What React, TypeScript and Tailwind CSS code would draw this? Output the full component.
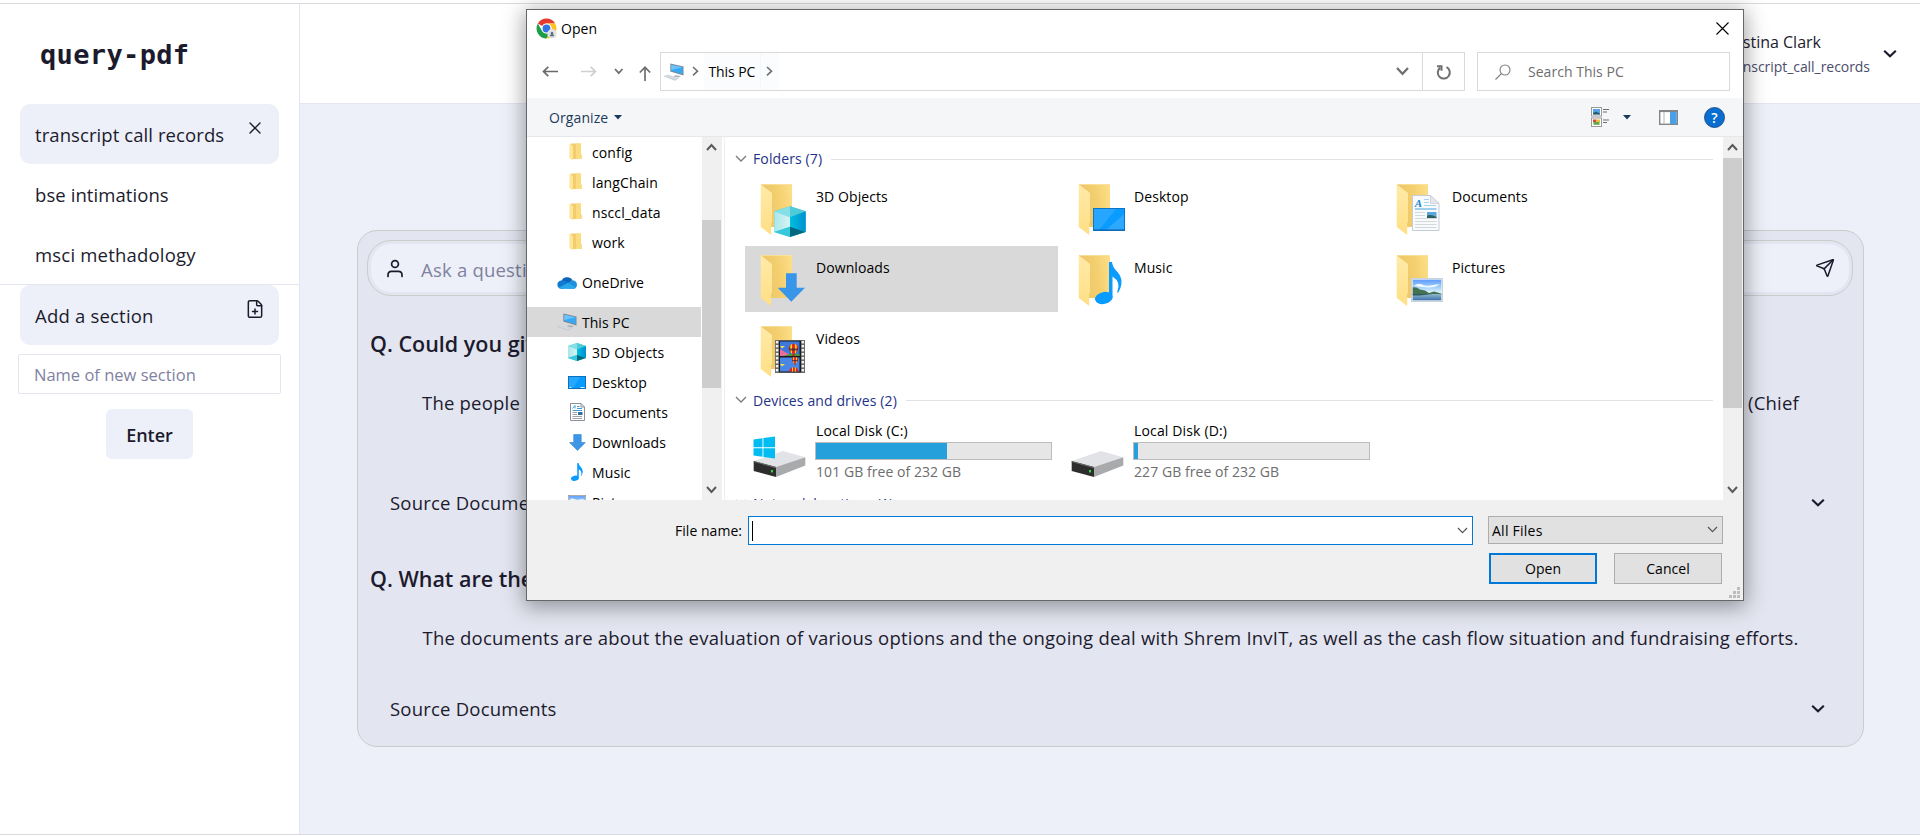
import React from "react";
import { FilePlus, Send, X } from "lucide-react";

type P = { className?: string };

const ChevronSmall = ({ className = "", w = 9, h = 6, sw = 1.6, up = false }: P & { w?: number; h?: number; sw?: number; up?: boolean }) => (
  <svg className={"shrink-0 " + className} width={w + 2} height={h + 2} viewBox={`-1 -1 ${w + 2} ${h + 2}`} fill="none" stroke="currentColor" strokeWidth={sw}>
    <path d={up ? `M0 ${h}L${w / 2} ${h / 6}L${w} ${h}` : `M0 0L${w / 2} ${h - h / 6}L${w} 0`} />
  </svg>
);

const ChevronBold = ({ className = "" }: P) => (
  <svg className={"shrink-0 text-[#1c1b2e] " + className} width="14" height="10" viewBox="0 0 14 10" fill="none" stroke="currentColor" strokeWidth="2.2">
    <path d="M1.2 1.8L7 7.2L12.8 1.8" />
  </svg>
);

const Caret = ({ className = "" }: P) => (
  <svg className={"shrink-0 " + className} width="8" height="5" viewBox="0 0 8 5">
    <path d="M0 0H8L4 4.6Z" fill="#1e395b" />
  </svg>
);

const ChromeIcon = () => (
  <svg width="21" height="21" viewBox="0 0 42 42" className="shrink-0">
    <circle cx="21" cy="21" r="20" fill="#fff" />
    <path d="M3.7 11A20 20 0 0 1 38.3 11H21A10 10 0 0 0 12.3 16Z" fill="#e33b2e" />
    <path d="M3.7 11A20 20 0 0 0 21 41L29.7 26A10 10 0 0 1 12.3 26Z" fill="#1e9e4a" />
    <path d="M38.3 11A20 20 0 0 1 21 41L29.7 26A10 10 0 0 0 29.5 15.5L26 11Z" fill="#fcc31e" />
    <circle cx="21" cy="21" r="9.8" fill="#fff" />
    <circle cx="21" cy="21" r="7.8" fill="#3273e6" />
    <circle cx="32" cy="31.5" r="9.5" fill="#dfe3e8" />
    <path d="M27.500 36.5Q27.500 33.500 30.500 32.500A2.600 2.600 0 1 1 33.500 32.500Q36.500 33.500 36.500 36.5Z" fill="#5f6b78" />
  </svg>
);

const PcIcon = () => (
  <svg width="20" height="18" viewBox="0 0 20 18" className="shrink-0">
    <path d="M6.3 0.5L19.5 3.5V12.5L6.3 8.5Z" fill="#7b8791" />
    <path d="M7.2 1.7L18.7 4.3V11.3L7.2 7.8Z" fill="#36a9f5" />
    <path d="M7.2 1.7L18.7 4.3L7.2 7Z" fill="#6cc3fa" />
    <path d="M11 12.2L17 13L14.5 14.6L9.5 13.4Z" fill="#a9b1b8" />
    <path d="M0 13L4 11.6L14.5 15.2L11 17.4Z" fill="#d3d9de" />
    <path d="M0 13.2L11 17.4L14.5 15.2" stroke="#aab2ba" strokeWidth=".6" fill="none" strokeDasharray="1.5 .7" />
  </svg>
);

const FolderSmall = () => (
  <svg width="13" height="18" viewBox="0 0 13 18" className="mr-[3px] shrink-0">
    <path d="M2 .5H12V11L12.6 12V16H3Z" fill="#f3cd6c" />
    <path d="M7 .5H12V11L12.6 12V16H7Z" fill="#fadb80" />
    <path d="M.4 .5L4 3.2V17.6L.4 15Z" fill="#ffe59a" />
  </svg>
);

const CloudIcon = () => (
  <svg width="20" height="13" viewBox="0 0 20 13" className="shrink-0">
    <path d="M4.5 5A6 5.5 0 0 1 15.5 4.2L10 9Z" fill="#0a64b8" />
    <path d="M4.3 12.8A4.2 4.2 0 0 1 4.8 4.4Q7 4 8.8 5.2L14 8.4L7 12.8Z" fill="#1179d0" />
    <path d="M11 7L14.8 4.2Q19.8 4.2 20 8.8Q19.8 12.8 16 12.8H9Z" fill="#1b90df" />
    <path d="M1.8 11.8L11 6.8L19 11.6Q18 12.8 16 12.8H4.3Q2.8 12.8 1.8 11.8Z" fill="#29a7ec" />
  </svg>
);

const Cube = ({ id }: { id: string }) => (
  <g>
    <defs>
      <linearGradient id={id + "l"} x1="0" x2="1" y1="0" y2="0">
        <stop offset="0" stopColor="#a9e8ea" />
        <stop offset="1" stopColor="#d6f4f3" />
      </linearGradient>
      <linearGradient id={id + "r"} x1="0" x2="1" y1="0" y2="0">
        <stop offset="0" stopColor="#00bfe0" />
        <stop offset="1" stopColor="#008fd0" />
      </linearGradient>
    </defs>
    <path d="M15.7 0L31.4 5V25.7L15.7 30.7L0 25.7V5Z" fill="#35c9de" />
    <path d="M0 5L15.7 0V11Z" fill="#84e0e6" />
    <path d="M31.4 5L15.7 0V11Z" fill="#4fcbd8" />
    <path d="M0 5L15.7 11V20.5L0 25.7Z" fill={`url(#${id}l)`} />
    <path d="M31.4 5L15.7 11V20.5L31.4 25.7Z" fill={`url(#${id}r)`} />
    <path d="M0 25.7L15.7 20.5V30.7Z" fill="#38c8dc" />
    <path d="M31.4 25.7L15.7 20.5V30.7Z" fill="#00687f" />
  </g>
);

const Note = () => (
  <g fill="#0a9bff">
    <path d="M14 0H17Q17.4 5 22 9.5Q30.5 18.500 23 31L22.200 30Q26.500 20 17.500 14.500V36H14Z" />
    <ellipse cx="8.8" cy="36" rx="8.9" ry="6" transform="rotate(-12 8.800 36)" />
  </g>
);

const Landscape = ({ w, h, frame = "#c9d3dc" }: { w: number; h: number; frame?: string }) => (
  <svg width={w} height={h} viewBox="0 0 32 24" preserveAspectRatio="none">
    <defs>
      <linearGradient id="sky" x1="0" x2="0" y1="0" y2="1">
        <stop offset="0" stopColor="#5f9cff" />
        <stop offset=".6" stopColor="#a5d2fb" />
        <stop offset="1" stopColor="#e2f3fc" />
      </linearGradient>
      <linearGradient id="lake" x1="0" x2="0" y1="0" y2="1">
        <stop offset="0" stopColor="#8fb9cc" />
        <stop offset="1" stopColor="#3f72ae" />
      </linearGradient>
    </defs>
    <rect x=".6" y=".6" width="30.800" height="22.800" fill="#f4f6f8" stroke={frame} strokeWidth="1.200" />
    <rect x="1.700" y="1.700" width="28.600" height="13" fill="url(#sky)" />
    <path d="M3 8Q7 4.500 11 6.500T19 7.500T29 6Q24 10 17 9.500T3 8Z" fill="#eef8fe" />
    <path d="M1.700 9.500Q5 8.500 9 11.500L14 12.500L18 15L23 13.500L30.300 15.500V17H1.700Z" fill="#44714f" />
    <rect x="1.700" y="16" width="28.600" height="6.300" fill="url(#lake)" />
    <path d="M1.700 16H22L9 17.600H1.700Z" fill="#2f5a5c" />
  </svg>
);

const Balloon = () => (
  <g>
    <path d="M0-5A5 5 0 0 1 5 0Q4 4 1.500 5.500H-1.500Q-4 4-5 0A5 5 0 0 1 0-5Z" fill="#e0231f" />
    <path d="M-1.500-4.700V5H-2.500Q-4-1-3-4Z M1.500-4.700V5H2.500Q4-1 3-4Z" fill="#ffd91f" />
    <path d="M-5 0H5L4 2H-4Z" fill="#2a2140" opacity=".7" />
    <rect x="-1.300" y="6" width="2.600" height="2" fill="#c42a1c" />
  </g>
);

const Film = () => (
  <svg x="15" y="15" width="30" height="33" viewBox="0 0 30 33">
    <rect width="30" height="33" fill="#6a6a6a" />
    <rect x="4" y=".8" width="22" height="31.500" fill="#1b1b1f" />
    <rect x="5" y="1.500" width="19.500" height="14.500" fill="#3d78dc" />
    <rect x="5" y="17.500" width="19.500" height="14" fill="#4a86e4" />
    <path d="M5 9L10 12L15 14.500V16H5Z" fill="#e86e9a" />
    <path d="M9 16Q16 12.500 24.500 14V16Z" fill="#3f9c3c" />
    <path d="M5 6H10L7 8.500Z M5 24H10L7 26.500Z" fill="#f4e14a" />
    <g transform="translate(18.500 8.500) scale(.95)"><Balloon /></g>
    <g transform="translate(20 20) scale(.6)"><Balloon /></g>
    <path d="M14 31.500A4.800 4.800 0 0 1 23.500 31.500Z" fill="#e0231f" />
    <path d="M17 31.500V27.500H18V31.500Z M19.800 31.500V27.500H20.800V31.500Z" fill="#ffd91f" />
    {[0, 1, 2, 3, 4, 5, 6, 7].map((i) => (
      <g key={i} fill="#f2f2f2">
        <rect x=".9" y={1 + i * 4} width="2.400" height="2.400" />
        <rect x="26.600" y={1 + i * 4} width="2.400" height="2.400" />
      </g>
    ))}
  </svg>
);

const DocPage = () => (
  <g>
    <path d="M16.500 12.500H34.500L43 20.500V47.500H16.500Z" fill="#f8fafc" stroke="#c5ccd3" />
    <path d="M34.500 12.500V20.500H43Z" fill="#e3e7eb" stroke="#c5ccd3" strokeWidth=".7" />
    <path d="M28 16.500H33M28 19.500H33M28 22.500H40" stroke="#a8d4ee" />
    <path d="M19 26H40.500" stroke="#4aa3da" />
    <path d="M19 29.500H29M19 32.500H29M19 35.500H40.500M19 38.500H40.500M19 41.500H40.500M19 44.500H40.500" stroke="#d3d8dd" />
    <rect x="31" y="29" width="9.500" height="6" fill="#5aa7dc" />
    <path d="M31 32.500Q35 31 40.500 34V35H31Z" fill="#2d5f5c" />
    <text x="18.800" y="24" fontFamily="Liberation Serif, serif" fontStyle="italic" fontWeight="bold" fontSize="11" fill="#1a86cc">A</text>
  </g>
);

type Kind = "cube" | "desktop" | "doc" | "down" | "music" | "pictures" | "video";

const FolderBig = ({ kind }: { kind: Kind }) => (
  <svg width="50" height="57" viewBox="0 0 50 57" className="shrink-0">
    <defs>
      <linearGradient id={"fb" + kind} x1="0" x2="1" y1=".2" y2="0">
        <stop offset="0" stopColor="#edc566" />
        <stop offset=".55" stopColor="#f4d070" />
        <stop offset="1" stopColor="#fedf88" />
      </linearGradient>
      <linearGradient id={"ff" + kind} x1="0" x2="0" y1="0" y2="1">
        <stop offset="0" stopColor="#ffeaa8" />
        <stop offset="1" stopColor="#ffdf85" />
      </linearGradient>
    </defs>
    <path d="M1 1H32V44H11Z" fill={`url(#fb${kind})`} />
    <path d="M1 1H32V1.800H2Z" fill="#fbe5a4" />
    <path d="M.7 1.300L12 10V39L11.200 40V52L.7 44Z" fill={`url(#ff${kind})`} />
    {kind === "cube" && <g transform="translate(14.300 23.300)"><Cube id="big" /></g>}
    {kind === "desktop" && (
      <g>
        <rect x="15.500" y="25.500" width="31" height="22" fill="#0a9bff" stroke="#0c74c4" />
        <path d="M16 26H38L21 47H16Z" fill="#27a6ff" />
        <path d="M46 31L28 47H46Z" fill="#3aaeff" opacity=".7" />
        <path d="M16 47H46.500" stroke="#0d5fa5" />
      </g>
    )}
    {kind === "doc" && <DocPage />}
    {kind === "down" && <path d="M26 19.300H36.700V33.700H45L31.300 47.700L17.700 33.700H26Z" fill="#3796ea" />}
    {kind === "music" && <g transform="translate(17 8)"><Note /></g>}
    {kind === "pictures" && <g transform="translate(15 24)"><Landscape w={32} h={24} /></g>}
    {kind === "video" && <Film />}
  </svg>
);

const Drive = ({ win = false }: { win?: boolean }) => (
  <svg width="54" height="42" viewBox="0 0 54 42" className="shrink-0">
    <path d="M.7 25L30 15L52.300 21.300L23 31Z" fill="#e2e3e6" />
    <path d="M23 31L52.300 21.300V29.500L23 41Z" fill="#a9aaac" />
    <path d="M.7 25L23 31V41L.7 35Z" fill="#2d2d2d" />
    <path d="M.7 25L23 31V32.200L.7 26Z" fill="#6b6b6b" />
    <rect x="18" y="34" width="2" height="2.400" fill="#2fe03b" />
    {win && (
      <g fill="#00bcf2">
        <path d="M.5 3.500L9.500 2.200V11.300H.5Z" />
        <path d="M10.400 2.100L22 .5V11.300H10.400Z" />
        <path d="M.5 12.200H9.500V20.800L.5 19.500Z" />
        <path d="M10.400 12.200H22V22.500L10.400 20.900Z" />
      </g>
    )}
  </svg>
);

const SmallDesktop = () => (
  <svg width="18" height="13" viewBox="0 0 18 13" className="shrink-0">
    <rect x=".5" y=".5" width="17" height="12" fill="#0a9bff" stroke="#0a70bd" />
    <path d="M1 1H12L6 11H1Z" fill="#27a8ff" />
    <path d="M1.500 11.500H16.500" stroke="#d8efff" strokeDasharray="2 9 4" />
  </svg>
);
const SmallDoc = () => (
  <svg width="15" height="18" viewBox="0 0 15 18" className="shrink-0">
    <path d="M.5 .5H11L14.500 4V17.500H.5Z" fill="#fff" stroke="#8b9196" />
    <path d="M11 .5V4H14.500" fill="none" stroke="#8b9196" />
    <path d="M2.500 5.500L5 2.500V5.500M7 3.500H9.500M7 5.500H12M2.500 7.500H12" stroke="#3f9ad6" fill="none" />
    <path d="M2.500 9.500H7M2.500 11.500H7M2.500 13.500H12M2.500 15.500H12" stroke="#9aa0a5" />
    <rect x="8" y="9" width="4.500" height="3" fill="#2c6f9e" />
  </svg>
);
const SmallDown = () => (
  <svg width="17" height="17" viewBox="0 0 17 17" className="shrink-0">
    <path d="M4.700 .5H12.200V8.500H16.300L8.500 16.500L.6 8.500H4.700Z" fill="#3d97e6" stroke="#2f83d0" strokeWidth=".6" />
  </svg>
);
const SmallCube = () => (
  <svg width="18" height="18" viewBox="0 0 31.400 30.700" preserveAspectRatio="none" className="shrink-0"><Cube id="sm" /></svg>
);
const SmallNote = () => (
  <svg width="12" height="18" viewBox="0 0 27 42.500" preserveAspectRatio="none" className="shrink-0"><Note /></svg>
);

const BackArrow = ({ className = "", flip = false }: P & { flip?: boolean }) => (
  <svg className={"shrink-0 " + className} width="16" height="11" viewBox="0 0 16 11" fill="none" stroke="currentColor" strokeWidth="1.700">
    <path d={flip ? "M0 5.500H14.500M9.700 .8L14.500 5.500L9.700 10.200" : "M16 5.500H1.500M6.300 .8L1.500 5.500L6.300 10.200"} />
  </svg>
);

const TreeRow = ({ icon, label, root = false, selected = false }: { icon: React.ReactNode; label: string; root?: boolean; selected?: boolean }) => (
  <div className={"flex h-[30px] w-[174px] shrink-0 items-center " + (selected ? "bg-[#d9d9d9] " : "") + (root ? "pl-[30px]" : "pl-[40px] tracking-[0.120px]")}>
    <div className="flex w-5 items-center justify-center">{icon}</div>
    <span className="ml-[5px] pt-px">{label}</span>
  </div>
);

const SectionHead = ({ label }: { label: string }) => (
  <div className="flex h-[22px] items-center pl-[10px] pr-[10px] text-[#1e3287]">
    <ChevronSmall className="text-[#7a7a7a]" w={10} h={6} sw={1.3} />
    <span className="ml-[6px] tracking-[0.12px]">{label}</span>
    <div className="mt-px ml-[9px] h-px flex-1 bg-[#e2e2e2]" />
  </div>
);

const tiles: { kind: Kind; label: string; selected?: boolean }[] = [
  { kind: "cube", label: "3D Objects" },
  { kind: "desktop", label: "Desktop" },
  { kind: "doc", label: "Documents" },
  { kind: "down", label: "Downloads", selected: true },
  { kind: "music", label: "Music" },
  { kind: "pictures", label: "Pictures" },
  { kind: "video", label: "Videos" },
];

const Disk = ({ label, free, fill, win = false }: { label: string; free: string; fill: string; win?: boolean }) => (
  <div className="flex h-[66px] w-[313px] pl-[8px]">
    <div className="pt-[17px]"><Drive win={win} /></div>
    <div className="ml-[8px] flex w-[237px] flex-col">
      <span className="h-[21px] pl-px leading-[24px] tracking-[0.150px]">{label}</span>
      <div className="mt-[2px] h-[18px] border border-[#bcbcbc] bg-[#e6e6e6]"><div className={"h-full bg-[#26a0da] " + fill} /></div>
      <span className="pl-px leading-[24px] tracking-[0.060px] text-[#6d6d6d]">{free}</span>
    </div>
  </div>
);

const Scrollbar = ({ top, thumb }: { top: string; thumb: string }) => (
  <div className="flex h-full w-[20px] shrink-0 flex-col items-start bg-[#f0f0f0] text-[#5a5a5a]">
    <div className={"flex w-[19px] shrink-0 justify-center pt-[6px] " + top}><ChevronSmall up w={9} h={6} sw={2} /></div>
    <div className={"w-[19px] bg-[#cdcdcd] " + thumb} />
    <div className="flex w-[19px] flex-1 items-end justify-center pb-[6px]"><ChevronSmall w={9} h={6} sw={2} /></div>
  </div>
);

const OpenDialog = () => (
  <div className="absolute top-[9px] left-[526px] flex h-[592px] w-[1218px] flex-col border border-[#66676b] bg-white text-[14px] tracking-[0.030px] whitespace-nowrap text-black shadow-[0_4px_20px_2px_rgba(0,0,0,0.36)]">
    <div className="flex h-[34px] shrink-0 items-center pl-[9px] pr-[14px] pt-[2px]">
      <ChromeIcon />
      <span className="ml-[4px]">Open</span>
      <svg className="ml-auto" width="13" height="13" viewBox="0 0 13 13" stroke="#000" strokeWidth="1.100"><path d="M.5 .5L12.500 12.500M12.500 .5L.5 12.500" /></svg>
    </div>
    <div className="flex h-[54px] shrink-0 items-center pt-px pl-[15px] text-[#6f6f6f]">
      <BackArrow className="text-[#6a6a6a]" />
      <BackArrow flip className="ml-[23px] text-[#cfcfcf]" />
      <ChevronSmall className="ml-[17px]" w={7.500} h={5} sw={1.800} />
      <svg className="ml-[15px] mt-[3px] shrink-0" width="12" height="15" viewBox="0 0 12 15" fill="none" stroke="currentColor" strokeWidth="1.700"><path d="M6 15V1.500M.8 6.500L6 1.300L11.200 6.500" /></svg>
      <div className="ml-[9.500px] flex h-[39px] w-[805px] items-center border border-[#d9d9d9]">
        <div className="ml-[3px]"><PcIcon /></div>
        <svg className="ml-[8px] shrink-0" width="7" height="11" viewBox="0 0 7 11" fill="none" stroke="currentColor" strokeWidth="1.600"><path d="M1 1L5.500 5.200L1 9.400" /></svg>
        <div className="ml-[4.500px] flex h-[37px] items-center bg-[#fbfcfe] px-[5px] text-black"><span className="tracking-[-0.100px]">This PC</span></div>
        <div className="flex h-[37px] w-[18px] items-center border-l border-[#f4f7fb] bg-[#fbfcfe] pl-[5px]">
          <svg className="shrink-0" width="7" height="11" viewBox="0 0 7 11" fill="none" stroke="currentColor" strokeWidth="1.600"><path d="M1 1L5.500 5.200L1 9.400" /></svg>
        </div>
        <ChevronSmall className="mr-[13px] ml-auto" w={11} h={7} sw={2.200} />
        <div className="flex h-full w-[42px] items-center justify-center border-l border-[#d9d9d9]">
          <svg width="16" height="16" viewBox="0 0 16 16" fill="none" stroke="#6f6f6f" strokeWidth="2"><path d="M10.500 3.200A6 6 0 1 1 4 3.900M1 2.200H5.500V6.800" /></svg>
        </div>
      </div>
      <div className="ml-[12px] flex h-[39px] w-[253px] items-center border border-[#d9d9d9] pl-[17px]">
        <svg width="16" height="16" viewBox="0 0 16 16" fill="none" stroke="#808080" strokeWidth="1.100"><circle cx="10" cy="6" r="5" /><path d="M6.500 9.500L.5 15.500" /></svg>
        <span className="ml-[17px] text-[#6d6d6d]">Search This PC</span>
      </div>
    </div>
    <div className="flex h-[39px] shrink-0 items-center border-b border-[#e6e8eb] bg-[#f5f6f8] pl-[22px] text-[#1e395b]">
      <span className="tracking-[0.100px]">Organize</span>
      <Caret className="ml-[6px]" />
      <svg className="ml-auto shrink-0" width="18" height="20" viewBox="0 0 18 20">
        <rect x=".5" y=".5" width="10" height="8.500" fill="#fff" stroke="#9a9a9a" />
        <rect x="2" y="2" width="7" height="5.500" fill="#5aa4e6" /><path d="M2 6L5 4.500L9 6.500V7.500H2Z" fill="#2a5d6b" />
        <rect x=".5" y="11" width="10" height="8.500" fill="#fff" stroke="#9a9a9a" />
        <rect x="2" y="12.500" width="3.500" height="2.800" fill="#d5483a" /><rect x="5.500" y="12.500" width="3.500" height="2.800" fill="#e8c338" /><rect x="2.500" y="15" width="6" height="2.800" fill="#64a844" />
        <path d="M12 2.500H18M12 5H16M12 13H18M12 15.500H16" stroke="#6f6f6f" />
      </svg>
      <Caret className="ml-[14px]" />
      <svg className="ml-[28px] shrink-0" width="19" height="15" viewBox="0 0 19 15">
        <rect x=".7" y=".7" width="17.600" height="13.600" fill="#fff" stroke="#858585" strokeWidth="1.400" />
        <path d="M1 1.300H18" stroke="#858585" strokeWidth="1.600" /><path d="M5 2V14" stroke="#b5b5b5" />
        <rect x="11" y="2" width="6.700" height="12" fill="#4a9fe6" />
      </svg>
      <svg className="mr-[18px] ml-[26px] shrink-0" width="21" height="21" viewBox="0 0 21 21">
        <circle cx="10.500" cy="10.500" r="10" fill="#0a6ed1" stroke="#0b3f7c" strokeWidth=".8" />
        <text x="10.500" y="15.600" textAnchor="middle" fontFamily="Open Sans, sans-serif" fontWeight="600" fontSize="14" fill="#fff">?</text>
      </svg>
    </div>
    <div className="flex h-[363px] shrink-0 overflow-hidden bg-white">
      <div className="flex h-[363px] w-[175px] shrink-0 flex-col overflow-hidden">
        <TreeRow icon={<FolderSmall />} label="config" />
        <TreeRow icon={<FolderSmall />} label="langChain" />
        <TreeRow icon={<FolderSmall />} label="nsccl_data" />
        <TreeRow icon={<FolderSmall />} label="work" />
        <div className="my-[10px] shrink-0"><TreeRow root icon={<CloudIcon />} label="OneDrive" /></div>
        <TreeRow root selected icon={<PcIcon />} label="This PC" />
        <TreeRow icon={<SmallCube />} label="3D Objects" />
        <TreeRow icon={<SmallDesktop />} label="Desktop" />
        <TreeRow icon={<SmallDoc />} label="Documents" />
        <TreeRow icon={<SmallDown />} label="Downloads" />
        <TreeRow icon={<SmallNote />} label="Music" />
        <TreeRow icon={<Landscape w={18} h={15} frame="#8e9499" />} label="Pictures" />
      </div>
      <Scrollbar top="h-[83px]" thumb="h-[168px]" />
      <div className="w-[3px] shrink-0 border-r border-[#f0f0f0]" />
      <div className="flex h-[363px] w-[998px] shrink-0 flex-col overflow-hidden pt-[11px]">
        <SectionHead label="Folders (7)" />
        <div className="mt-[5px] grid shrink-0 grid-cols-[313px_313px_313px] gap-[5px] pt-px pl-[20px]">
          {tiles.map((t) => (
            <div key={t.label} className={"flex h-[66px] pt-[8px] pl-[15px] " + (t.selected ? "bg-[#d9d9d9]" : "")}>
              <FolderBig kind={t.kind} />
              <span className="ml-[6px] h-[28px] leading-[28px] tracking-[0.080px]">{t.label}</span>
            </div>
          ))}
        </div>
        <div className="mt-[6px] shrink-0"><SectionHead label="Devices and drives (2)" /></div>
        <div className="mt-[8px] flex shrink-0 gap-[5px] pl-[20px]">
          <Disk win label="Local Disk (C:)" free="101 GB free of 232 GB" fill="w-[131px]" />
          <Disk label="Local Disk (D:)" free="227 GB free of 232 GB" fill="w-[4px]" />
        </div>
        <div className="mt-[7px] shrink-0"><SectionHead label="Network locations (1)" /></div>
      </div>
      <Scrollbar top="h-[21px]" thumb="h-[250px]" />
    </div>
    <div className="flex flex-1 flex-col bg-[#f0f0f0] pt-[16px]">
      <div className="flex h-[29px] shrink-0 items-start">
        <span className="w-[215px] text-right leading-[29px]">File name:</span>
        <div className="ml-[6px] flex h-[29px] w-[725px] items-center border border-[#0078d7] bg-white">
          <div className="ml-[3px] h-[20px] w-px bg-black" />
          <ChevronSmall className="mr-[4px] ml-auto text-[#555]" w={9} h={5.500} sw={1.200} />
        </div>
        <div className="ml-[15px] flex h-[28px] w-[235px] items-center border border-[#adadad] bg-[#e1e1e1] pl-[3px]">
          <span className="tracking-[0.250px]">All Files</span>
          <ChevronSmall className="mr-[4px] ml-auto text-[#555]" w={9} h={5.500} sw={1.200} />
        </div>
      </div>
      <div className="mt-[8px] flex pl-[962px]">
        <div className="flex h-[31px] w-[108px] items-center justify-center border-2 border-[#0078d7] bg-[#e1e1e1]">Open</div>
        <div className="ml-[17px] flex h-[31px] w-[108px] items-center justify-center border border-[#adadad] bg-[#e1e1e1]">Cancel</div>
      </div>
      <svg className="mt-[3px] mr-[3px] ml-auto" width="11" height="11" viewBox="0 0 11 11" fill="#bdbdbd">
        <path d="M8 0H11V3H8ZM4 4H7V7H4ZM8 4H11V7H8ZM0 8H3V11H0ZM4 8H7V11H4ZM8 8H11V11H8Z" />
      </svg>
    </div>
  </div>
);

export default function App() {
  return (
    <div className="relative h-[836px] w-[1920px] overflow-hidden bg-white font-['Open_Sans','Noto_Sans',sans-serif] text-[#1c1b2e]">
      <div className="mt-[3px] flex h-[832px] border-y border-[#dadbdf]">
        <aside className="flex w-[300px] shrink-0 flex-col border-r border-[#e3e5f1] bg-white">
          <div className="h-[100px] pt-[34px] pl-[40px] font-['DejaVu_Sans_Mono',monospace] text-[27px] leading-[34px] font-bold tracking-[0.350px]">query-pdf</div>
          <div className="flex flex-col px-5 text-[18.500px] tracking-[0.080px]">
            <div className="flex h-[60px] items-center justify-between rounded-[10px] bg-[#edf0f8] pr-[14px] pl-[15px]">
              <span className="pt-[2px]">transcript call records</span>
              <X size={20} strokeWidth={1.600} className="-mt-3" />
            </div>
            <div className="flex h-[60px] items-center pt-[2px] pl-[15px]">bse intimations</div>
            <div className="flex h-[60px] items-center pt-[2px] pl-[15px] tracking-[0.200px]">msci methadology</div>
          </div>
          <div className="flex flex-col border-t border-[#e3e5f1] px-5">
            <div className="flex h-[60px] items-center justify-between rounded-[10px] bg-[#edf0f8] pr-[14px] pl-[15px] text-[18.500px] tracking-[0.200px]">
              <span className="pt-[2px]">Add a section</span>
              <FilePlus size={20} strokeWidth={1.800} className="-mt-3" />
            </div>
            <div className="-mx-[2px] mt-[9px] flex h-[40px] items-center rounded-[2px] border border-[#e3e5f1] pt-[2px] pl-[15px] text-[16.500px] text-[#7f829f]">Name of new section</div>
            <div className="mt-[15px] flex h-[50px] w-[87px] items-center justify-center self-center rounded-[6px] bg-[#edf0f8] pt-[2px] text-[18px] font-semibold">Enter</div>
          </div>
        </aside>
        <div className="flex flex-1 flex-col bg-[#edf0f8]">
          <header className="flex h-[100px] shrink-0 items-center justify-end border-b border-[#e3e5f1] bg-white pr-[23px]">
            <div className="flex flex-col items-end pt-[2px]">
              <span className="mr-[49px] text-[16px] leading-[24px]">Christina Clark</span>
              <span className="text-[14px] leading-[25px] tracking-[-0.050px] text-[#4b4d6b]">transcript_call_records</span>
            </div>
            <ChevronBold className="ml-[13px]" />
          </header>
          <main className="mt-[126px] mr-[56px] ml-[57px] h-[517px] rounded-[20px] border border-[#cccccc] bg-[#e3e5f0] text-[18.500px] tracking-[0.210px]">
            <div className="mt-[9px] mr-[10px] ml-[9px] h-[56px] rounded-[24px] border border-[#cccccc] p-[3px]">
              <div className="flex h-full items-center rounded-[20px] bg-[#edf0f8] pr-[14px] pl-[15px]">
                <svg width="18" height="19" viewBox="0 0 18 19" fill="none" stroke="currentColor" strokeWidth="1.700" strokeLinecap="round">
                  <circle cx="9" cy="5" r="3.400" />
                  <path d="M2 17.500V16Q2 12.300 5.500 12.300H12.500Q16 12.300 16 16V17.500" />
                </svg>
                <span className="ml-[17px] pt-[3px] text-[#7f829f]">Ask a question</span>
                <Send size={20} strokeWidth={1.800} className="ml-auto" />
              </div>
            </div>
            <h2 className="mt-[32px] h-[32px] pl-[12px] text-[21.500px] leading-[32px] font-semibold tracking-normal">Q. Could you give</h2>
            <div className="mt-[28px] mr-[64px] ml-[64px] flex h-[30px] justify-between leading-[30px]"><span>The people</span><span>(Chief</span></div>
            <div className="mt-[70px] flex h-[30px] items-center justify-between pr-[38px] pl-[32px]"><span>Source Documents</span><ChevronBold /></div>
            <h2 className="mt-[45px] h-[32px] pl-[12px] text-[21.500px] leading-[32px] font-semibold tracking-normal">Q. What are the documents about?</h2>
            <div className="mt-[28px] ml-[64.500px] h-[30px] leading-[30px] tracking-[0.214px] whitespace-nowrap">The documents are about the evaluation of various options and the ongoing deal with Shrem InvIT, as well as the cash flow situation and fundraising efforts.</div>
            <div className="mt-[41px] flex h-[30px] items-center justify-between pr-[38px] pl-[32px]"><span>Source Documents</span><ChevronBold /></div>
          </main>
        </div>
      </div>
      <OpenDialog />
    </div>
  );
}
